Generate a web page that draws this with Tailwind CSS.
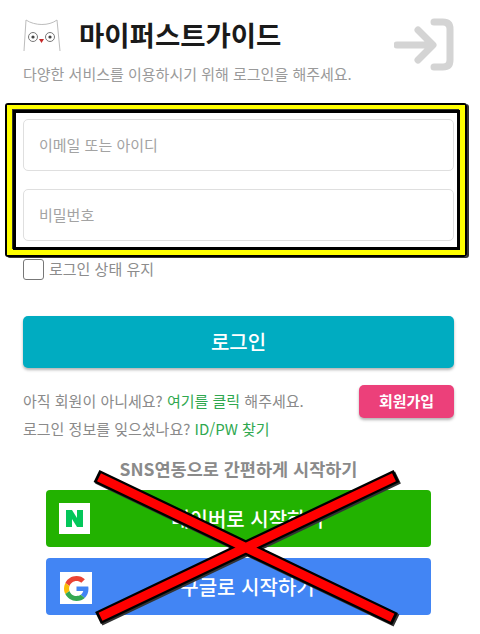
<!DOCTYPE html>
<html lang="ko">
<head>
<meta charset="utf-8">
<script src="https://cdn.jsdelivr.net/npm/@tailwindcss/browser@4"></script>
</head>
<body class="bg-white">
<div class="relative w-[480px] h-[634px] overflow-hidden bg-white font-['Noto_Sans_CJK_KR','Noto_Sans',sans-serif]">
  <div class="pl-[23px] pr-[26px] pt-[18px]">
    <div class="flex items-center h-[34px]">
      <svg width="38" height="34" viewBox="0 0 38 34" fill="none" class="shrink-0">
        <path d="M1 33 L3 2 C12 8 26 8 34 2 L37 33" stroke="#bdbdbd" stroke-width="1"/>
        <circle cx="10" cy="19" r="4.5" fill="#fff" stroke="#777" stroke-width="1"/>
        <circle cx="27" cy="19" r="4.5" fill="#fff" stroke="#777" stroke-width="1"/>
        <circle cx="10" cy="19" r="1.6" fill="#444"/>
        <circle cx="27" cy="19" r="1.6" fill="#444"/>
        <path d="M16 21 L21 21 L18.5 25 Z" fill="#c62828"/>
      </svg>
      <h1 class="ml-[18px] text-[27.5px] leading-none font-bold text-[#1a1a1a] whitespace-nowrap">마이퍼스트가이드</h1>
      <svg width="60" height="54" viewBox="0 0 60 54" fill="none" class="absolute left-[394px] top-[18px]">
        <path d="M3 27 H38 M24 12 L39 27 L24 42" stroke="#d4d4d4" stroke-width="7" stroke-linecap="round" stroke-linejoin="round"/>
        <path d="M40 4 H49 Q56 4 56 11 V42 Q56 49 49 49 H40" stroke="#d4d4d4" stroke-width="7" stroke-linecap="round"/>
      </svg>
    </div>
    <p class="mt-[12px] text-[15px] leading-[20px] text-[#9a9a9a] whitespace-nowrap">다양한 서비스를 이용하시기 위해 로그인을 해주세요.</p>
    <div class="mt-[35px] flex flex-col gap-[18px]">
      <div class="h-[52px] border border-[#dfdfdf] rounded-[5px] flex items-center pl-[15px] text-[15px] text-[#a3a3a3]">이메일 또는 아이디</div>
      <div class="h-[52px] border border-[#dfdfdf] rounded-[5px] flex items-center pl-[15px] text-[15px] text-[#a3a3a3]">비밀번호</div>
    </div>
    <label class="mt-[18px] flex items-center h-[21px]">
      <span class="w-[21px] h-[21px] border border-[#777] rounded-[3px] bg-white"></span>
      <span class="ml-[5px] text-[15px] text-[#8c8c8c]">로그인 상태 유지</span>
    </label>
    <button class="mt-[36px] w-full h-[52px] rounded-[5px] bg-[#00acc1] text-white text-[20px] font-medium shadow-[0_2px_3px_rgba(0,0,0,0.3)]">로그인</button>
    <div class="mt-[17px] flex justify-between">
      <div class="pt-[2px] text-[15px] leading-[28px] text-[#8a8a8a] whitespace-nowrap">
        <p>아직 회원이 아니세요? <span class="text-[#2fa84f]">여기를 클릭</span> 해주세요.</p>
        <p>로그인 정보를 잊으셨나요? <span class="text-[#2fa84f]">ID/PW 찾기</span></p>
      </div>
      <button class="w-[95px] h-[33px] rounded-[5px] bg-[#ec407a] text-white text-[15px] font-bold shadow-[0_2px_3px_rgba(0,0,0,0.3)]">회원가입</button>
    </div>
    <h2 class="mt-[14px] text-center text-[17.5px] leading-[24px] font-bold text-[#8a8a8a]">SNS연동으로 간편하게 시작하기</h2>
    <div class="mt-[9px] mx-[23px] flex flex-col gap-[11px]">
      <div class="relative h-[57px] rounded-[4px] bg-[#22b200] flex items-center justify-center pl-[18px] text-white text-[20px] font-medium">
        <span class="w-[31px] h-[31px] bg-white absolute left-[13px] top-[13px] flex items-center justify-center">
          <svg width="17" height="17" viewBox="0 0 17 17"><path d="M0 0 H6 L11 8 V0 H17 V17 H11 L6 9 V17 H0 Z" fill="#03c75a"/></svg>
        </span>
        네이버로 시작하기
      </div>
      <div class="relative h-[57px] rounded-[4px] bg-[#4285f4] flex items-center justify-center pl-[18px] text-white text-[20px] font-medium">
        <span class="w-[32px] h-[32px] bg-white absolute left-[14px] top-[14px] flex items-center justify-center">
          <svg width="25" height="25" viewBox="0 0 48 48">
            <path fill="#EA4335" d="M24 9.5c3.5 0 6.7 1.2 9.2 3.6l6.9-6.9C35.9 2.4 30.5 0 24 0 14.6 0 6.5 5.4 2.6 13.2l8 6.2C12.4 13.7 17.700 9.500 24 9.500z"/>
            <path fill="#4285F4" d="M46.980 24.550c0-1.570-.150-3.090-.380-4.550H24v9.020h12.940c-.580 2.960-2.260 5.480-4.780 7.180l7.730 6c4.510-4.180 7.090-10.360 7.090-17.650z"/>
            <path fill="#FBBC05" d="M10.530 28.590c-.480-1.450-.760-2.990-.760-4.590s.270-3.140.760-4.590l-7.980-6.190C.920 16.460 0 20.120 0 24c0 3.880.920 7.540 2.560 10.780l7.970-6.190z"/>
            <path fill="#34A853" d="M24 48c6.480 0 11.930-2.130 15.890-5.810l-7.730-6c-2.150 1.450-4.920 2.300-8.160 2.300-6.260 0-11.570-4.220-13.470-9.910l-7.980 6.190C6.510 42.620 14.620 48 24 48z"/>
          </svg>
        </span>
        구글로 시작하기
      </div>
    </div>
  </div>

  <div class="absolute left-[5px] top-[103px] w-[462px] h-[154px] rounded-[3px] border-[2px] border-black bg-transparent shadow-[2px_1px_0_#333] pointer-events-none">
    <div class="w-full h-full border-[5px] border-l-[6px] border-[#ffff00]">
      <div class="w-full h-full border-[3px] border-black shadow-[-1px_-1px_0_#333]"></div>
    </div>
  </div>

  <svg class="absolute left-0 top-0 pointer-events-none" width="480" height="634" viewBox="0 0 480 634" fill="none">
    <g stroke-linecap="butt">
      <path d="M96.500 476 L395 619 M396.500 476 L98 618" stroke="#333" stroke-width="13.500" transform="translate(1.500 1.500)"/>
      <path d="M96.500 476 L395 619 M396.500 476 L98 618" stroke="#000" stroke-width="13.500"/>
      <path d="M99 477.200 L392.500 617.800 M394 477.200 L100.500 616.800" stroke="#ff0000" stroke-width="9"/>
    </g>
  </svg>
</div>
</body>
</html>
